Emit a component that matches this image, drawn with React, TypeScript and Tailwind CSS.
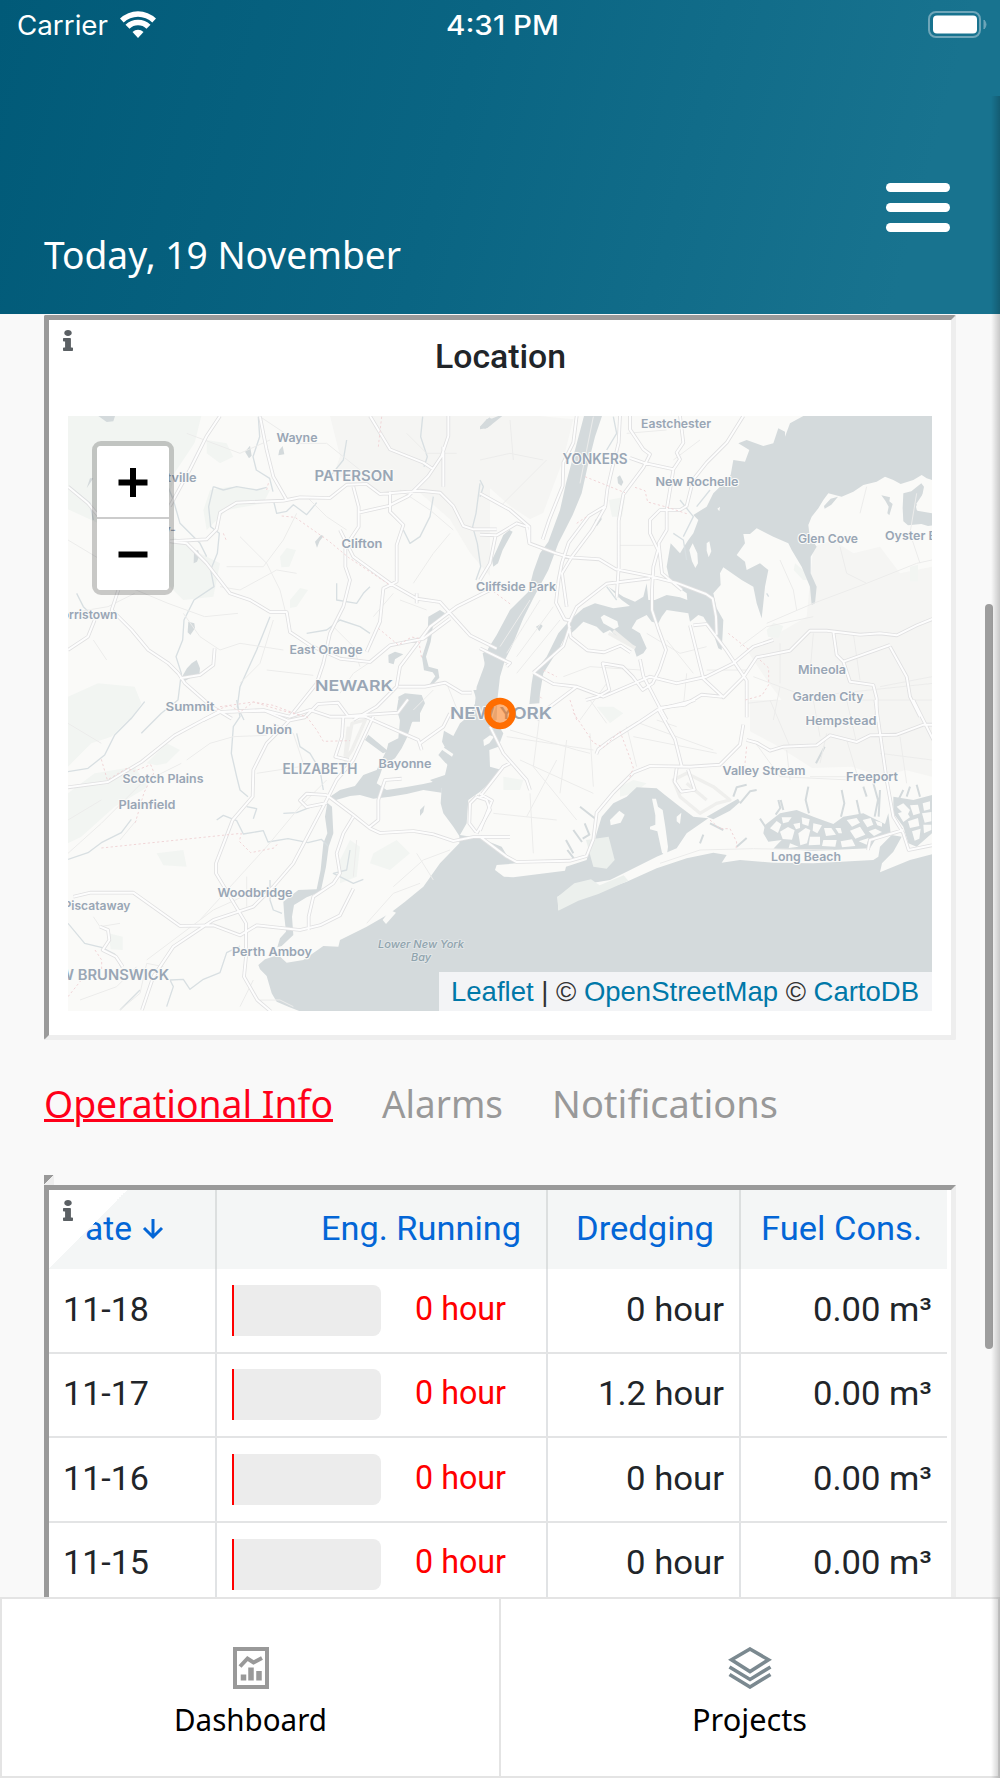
import type { ReactNode } from "react";
import { FaInfo } from "react-icons/fa";

type TileId = "nw" | "ne" | "sw" | "se";

// Each tile draws in its own 3x space, placed on the 864x594 map viewport.
const TILE_TRANSFORM: Record<TileId, string> = {
  nw: "translate(-28 -16) scale(.33333)",
  ne: "translate(412 -16) scale(.33333)",
  sw: "translate(-28 284) scale(.33333)",
  se: "translate(412 284) scale(.33333)",
};

const TILES: TileId[] = ["nw", "ne", "sw", "se"];

const WATER: Record<TileId, string[]> = {
  nw: [
    "M1350 745l-22 15 8 40-12 50-10 60 5 50h40z",
    "M175 48l25 18 20-2 5-16z",
    "M1320 80l20-22 14-4v20l-18 12z",
    "M445 665l18 5 2 15-14 20-8-8zM455 790l15-10 10 25-2 20-20 5-28 15-4-15 15-25z",
    "M1075 890l20-10 50 5 10 25-15 30v25h-60z",
    "M1165 650l35-20 15 10-35 30-8 55-14 45 8 30 28 8 4 25-24 25-6-4 18-25-8-12-26-6-6-40 16-50z",
    "M825 425l18-20 8 3-12 15-8 20zM1045 765l20-10 25 8-25 15-4 15-15-5zM718 150l10-12 5 25-18 3zM615 155l15-18 5 30-8 8z",
    "M462 455l12-5 5 15-8 20-10 5zM150 235l10 0-20 30zM1338 60l12-8v20z",
  ],
  ne: [
    // Hudson
    "M312 48H366L345 110L325 190L305 280L278 345L235 430L205 510L160 595L130 655L95 740L75 780L60 830L52 900L50 960H-20L-10 860L12 800L25 745L50 705L90 630L145 575L160 515L180 460L205 425L240 330L258 250L285 150Z",
    "M0 80l25-20 30-12h12l-45 36-22 4z",
    // Long Island Sound and East River
    "M970 48H1356V240L1340 235L1325 225L1300 240L1262 252L1240 240L1215 230L1190 245L1150 255L1120 275L1085 290L1045 280L1030 300L1015 325L995 350L985 375L988 400L1000 425L1010 440L992 470L992 520L1010 560L1005 610L995 615L990 560L965 500L935 450L925 430L880 410L830 385L810 402L790 402L795 430L770 465L795 485L800 510L840 490L865 510L855 560L850 610L845 655L830 610L820 560L785 540L730 502L720 520L722 555L700 580L710 625L730 660L728 700L725 750L715 745L700 700L670 650L655 645L630 665L625 640L560 630L545 650L535 670L515 665L500 645L470 660L455 685L480 700L500 745L490 760L470 770L460 740L420 720L390 690L370 700L350 680L310 665L285 690L250 720L240 740L215 780L190 820L180 880L178 910L148 912L155 850L160 820L200 770L235 700L270 660L310 625L345 610L400 625L450 618L425 600L385 560L430 590L465 605L490 590L500 550L505 600L525 600L560 585L600 592L622 600L620 580L570 545L560 500L572 430L600 460L612 440L625 420L640 400L655 360L640 345L680 320L700 280L720 260L752 225L760 180L795 185L808 150L775 130L800 120L850 138L880 130L895 85L915 95L915 110L930 70Z",
    "M1270 280l24-6 30-24 8 10-6 30-18 30 4 12 46 8 0 36-14 2-20-6-40 4-14-12-2-40zM1204 286l26 6-2 12 10 8-10 34-6-6 4-20-10-18z",
    "M412 232l8-6 10 20-6 12-10-8zM345 360l18-12 2 10-14 20-8-2zM168 680l14-8 6 6-10 16z",
    "M1032 318l20-22 22-6-20 24-20 12zM50 450l20-45 18-15 10 5-30 55-14 40-14 10-4-20z",
  ],
  sw: [
    // Newark Bay
    "M1075 0H1138L1128 45L1115 70L1100 115L1085 145L1065 175L1030 195L1020 225L1010 250L1040 270L1095 262L1150 252L1205 240L1205 278L1150 270L1100 282L1050 290L1000 296L960 285L930 288L880 302L870 290L900 270L945 258L970 225L1010 210L1025 180L1040 150L1045 130L1075 115L1080 60L1070 30Z",
    // Arthur Kill
    "M862 308L876 320L880 400L866 440L858 500L842 575L800 592L762 615L756 650L760 705L725 738L712 742L720 715L738 695L733 650L730 605L775 570L830 568L842 510L850 430L862 400L855 350Z",
    "M975 120l10-16 60 50-16 6zM1140 330l14-14-4 20-10 12z",
  ],
  se: [
    // Upper and Lower Bay, ocean and Jamaica Bay
    "M-20 -30L-10 0L-30 45L-60 70L-80 108L-108 92L-114 125L-106 140L-125 165L-98 195L-105 225L-150 240L-115 265L-118 310L-110 340L-80 380L-62 408L-62 430L-120 490L-170 560L-225 605L-270 640L-340 680L-420 720L-425 740L-470 738L-530 780L-580 788L-605 765L-645 778L-665 795L-660 808L-640 828L-625 880L-610 905L-575 920L-540 934H1360V462L1290 480L1200 517L1206 490L1240 455L1265 410L1235 405L1200 440L1195 470L1180 480L1000 490L880 488L780 480L725 488L740 465L700 458L620 475L530 505L440 545L340 580L290 600L235 630L232 590L300 555L390 540L440 515L530 470L590 445L620 400L685 355L640 350L600 320L555 285L530 265L470 262L440 290L400 310L365 350L350 400L345 420L330 440L320 480L290 490L258 500L255 512L100 532L72 530L45 510L50 495L110 490L80 465L65 440L0 415L-60 405L-40 370L-35 300L0 275L30 248L65 210L30 200L28 150L55 140L70 100L45 60L50 -30Z",
    "M680 350l60-34 34-20 6 10-30 26-50 26z",
    // South shore marshes
    "M855 375L900 340L950 330L1000 350L1060 372L1090 350L1150 340L1215 372L1225 340L1232 400L1190 412L1170 445L1000 452L880 446L905 420L865 425L850 400Z",
    "M1240 290L1300 300L1356 285V400L1310 440L1285 430L1270 380L1240 340Z",
  ],
};

const ISLANDS: Record<TileId, string[]> = {
  nw: [],
  ne: [
    "M628 450l10-20 14 30 2 30-8 14-10-20zM680 430l8-6 6 30-8 18-6-20zM362 652l10-8 40 20 4 16-14 8-32-18zM712 326l8-6-2 14z",
    "M1310 310l20-30 12 2 2 50-34-2z",
  ],
  sw: [
    "M1150 168l72 24-10 20-76-34zM1190 128l50 34-4 8-52-36z",
    "M1050 630l-22 30 10 12 30-34z",
  ],
  se: [
    "M10 120l20-14 12 4-14 20-16 8z",
    "M510 380l16-6 0-28-10-50 12 0 6 24 14 10 8 50 8 60-4 30-14-12-14-64-22-6zM390 360l28-28 16 12-12 24-30 8zM590 350l14-12-4 34-10-8z",
    "M600 450l30-30 40-24 14 10-4 34-60 22zM1250 320l20-10 20 20-10 20z",
    "M870 385l20-22 14 10-10 26zM905 352l30 0-10 14-16 4zM900 395l24-14 20 10-8 28-28-2zM940 372l20-4 0 16-12 4zM955 400l22-16 14 6-10 40-20 6zM965 352l24 6-4 20-18-6zM1000 370l26 6-14 24-14-8zM990 410l30 0 0 24-34 2zM1032 384l22 0 14 20-30 4zM1030 420l40 0-4 20-40-2zM1066 384l16 0 4 16-10 0zM1100 360l30-6 10 14-24 12zM1110 392l30-12 16 24-30 12zM1148 360l24-6 8 20-18 8zM1166 394l20-8 20 10-24 12zM1082 424l34-6 10 20-40 4zM1136 424l30-10-6 20zM1186 362l20 6 0 12-14-4zM930 430l26 10-30 4z",
    "M1254 340l24-8 12 20-20 14zM1290 316l24-2 6 26-20 6zM1328 310l22-6 0 24-18 4zM1284 364l30-10 4 24-28 6zM1326 340l28-4 0 28-20 4zM1296 394l26-8-4 30-14 6zM1330 374l24 0 0 16-22 10z",
  ],
};

const CREEKS =
  "M895 300l6 24-14 20M910 330l-8-30M985 260l-8 40 10 40M1085 270l8 40-10 40M1130 300l10 44M1180 250l14 50-10 50M1160 290l-10-30M1200 270l-4 80M1250 310l20-40M1280 290l10-30M1320 290l-10-36M840 356l20 30M1034 140l-26 50M760 290l10-28 30-8M780 310l30-36 20-4M690 370l40 20M660 430l10-26M300 320l46 36M314 370l14 34-20 12M280 390l26 36M258 420l22 40M262 450l20 26M770 440l30-26";

const PARKS: Record<TileId, string[]> = {
  nw: [
    "M84 48h400l-20 80-60 90-30 140-60 60-100-30-130-60zM84 890l90-40 110 10 20 50-30 50H84zM510 270l60-10 120 10-20 40-110 20-60 60-10-60zM720 470l20-26 28 6-20 50-24 2zM750 600l30-36 24 6-34 50-20 4zM500 120l60 10 20 40-40 20-40-30z",
    "M400 410l80 50 60 30-20 100-90 10-60-60z",
  ],
  ne: ["M860 690l20-22 30 10-14 36-32-4zM945 490l24 20 20 30-20 0-28-30zM386 300l50-10-10 60-30 0zM1290 500l24-6 0 50-24 0z"],
  sw: ["M84 0h180l10 50-60 60-60 20-70 70zM320 190l60-60 40 20-40 40-30 6zM350 460l80-10 10 50-70-4zM206 700l42 10 0 40-36-2zM900 480l30-60 30 20-10 90-50 20zM84 280l80-60 120-20 40 60-100 60-100 90-40 20zM1000 460l70-40 40 40-60 50-60-20z"],
  se: ["M420 260l40-20 40 10-40 30-40 10zM70 230l60 10-10 30-50 0zM350 20l50 0 30 20-40 30z"],
};

// Barrier-beach parks that sit on top of the water.
const BEACH_PARKS = "M233 590l50-40 50-12 26 18 72-30 14 16-90 40-60 20-60 30zM318 420l68-10 18 70-24 26-40-6z";

const URBAN: Record<TileId, string[]> = {
  nw: ["M870 48h480v480l-60-70-60-100-90-80-110 0-90-40-60-10 20-60z"],
  ne: ["M0 48h180l100 10-30 120-60 160-40 20-60-40-90-80zM1000 440l60-20 60 40 80-20 60 80 96-20V960H1010l-90-40-60-80-60-90 60-30 120-70z"],
  sw: [],
  se: ["M810 0h546v230l-80-20-70 20-90-30-120 4-110-70-76-40z"],
};

const AIRPORTS: Partial<Record<TileId, string>> = {
  ne: "M386 700l80 44M400 692l60 50",
  sw: "M936 70l40-10-40 90-20 30zM925 80l-10 90",
  se: "M580 240l40-20 80 40 50 40-40 10-50 30-60-50zM620 250l60 50",
};

const STREAMS: Partial<Record<TileId, string>> = {
  nw: "M655 50l4 60-20 60 10 40 40 25 10 40M520 260l30 10 40-10 60 10 30-8M520 260l-14 60 6 60 26 20-6 60-20 50 10 50-60 40-30 60-4 60-20 50 16 50-10 80-50 40-60 60M380 250l20 50 20 70 60 60 20 40M700 300l10 40 30-6 20-20 40 30 30-36M1148 50l-6 60 20 60-10 30M920 120l-10 60-40 50M1320 250l-12 90-10 40 14 50 10 70-14 40M690 650l-40 100-50 110-8 60 20 40M800 700l60-10 40-30 60 20 30 20M890 550l0 50 60 10 20-30 20-20M90 260l60 50 10 50M1180 290l-10 60-30 60-30 20-20-40M110 580l20 40 20 20",
  ne: "M0 240l10 20-10 30M380 560l30 40M400 50l10 50-30 50M860 580l6 10M600 300l40 50-30 60M580 400l30 20 10 60M650 320l40-50",
  sw: "M84 215l60-10 50-40 30-60 50-50 40-50M84 478l60-20 40-30 60-30 30-40M590 0l10 50-20 30-6 80 16 70 10 40 24 20M530 360l20-14 40 16 20 40 60-10 14 34 60-10 60 12 40-10 20 20M620 320l30 6-10 30M770 100l10 40 30 20 30 50 10 60M730 340l40-2 60-24M84 670l50 60 50 12 40 20 20 40M240 930l60-60M380 920l20-60-10-20 40-2 20 30 40-30 50-20 20-60 40-20M690 540l0 60 10 30 26 10M930 450l-10 60-40 10 60 30 30-12",
};

const MAIN_ROADS: Record<TileId, string> = {
  nw: "M540 48l-40 60-50 100-60 110M84 260l60 50 50 60 30 80M84 750l60-40 20-50M235 570l-20 60 60 60 50 60 60 40 30 30 20 30 80 70 60 36M390 424l110-6 30-30 10-50 50-30 140-6 50-10 90 2 50-40 60-2 40 30 120-10 60 6 40 40 30 60 30 10 70 0M390 424l50 6 60 60 70 90 60 20 60 36 50 0 10 60 60 40 90 40 90 10 60-50 100-20 80-60M660 50l20 100 20 80 40 70M990 48l60 100 100 40 30 20M1225 48l0 60-20 60-40 60-60 60-60 30-90 20M940 260l16 60 0 60-40 60 0 60 14 40-20 80-40 80-20 90-20 60-80 100M1050 275l0 60 40 40-20 60 0 110-40 20-10 100-40 90M900 390l40 80 110 80 80 46 70 10 90 100 80 40M1350 570l-100 50-80 60-60 80-30 40-10 60-60 60-70 40M1075 860l80 0 60-12 50 30 30 0M490 960l50-24 130-6 80 20 60-20 60 20 110 0M420 835l60-10 40-30 4-50M1210 260V140M1130 610l0-30",
  ne: "M290 48l-10 80-30 60-2 70-40 100-20 60M0 280l90 50 58 50 0 50M0 404l50 2 60-36 30 10 8 50 80 30 40 12 90 6 50 30 100 20 80 20 90 34 20 14 10 54 2 54M0 540l30-50 16-80M420 48l-4 80-20 80-14 60-6 50-50 30-60 80-20 60-10 50-8 70 26 50 20 4M376 320l-40 70-60 80-30 50 14 100M450 48v40l40 60 20 15-20 40-60 80-14 80 0 140-6 90M600 48l10 80-20 30 10 20-20 30-90-20-40-14M790 48l-50 80-60 60-40 50-20 80-20 12-60 0-30 30 0 40 24 50-14 50-4 70 0 60 20 60 22 60-20 60-20 40-30 20-30-40-30-30-60-10 20 80-34 20-36 10M580 210l-20 120 0 60-24 40 10 90 60 50M510 535l-130 16-90 70-24 50 6 40 50 40 50 6 50-20 30 20M640 676l40-4 60 80 20 30 40 60 0 110M630 676l40 160 60 56 60-60 40-60 100-20 60-60 50 0 100 12 60-4 50 6 60-30 50-20M1230 740l50 90 10 60 30 60M1060 695l10 70 20 20 140-50M480 778l10 50 50 96 20 36M290 860l80 30 140-60 80 20 90-20 80-40 60-50 60-20M160 818l60 34 70 8-80 60-40 40M160 818l90-80 20-60M0 745l90 44-10 10M535 924l80-10 50-30 60 6M1090 785l20 60 70 10 10 40 0 70",
  sw: "M84 262l120-16 100-60 100-80 130-70 140-4 70 30 50-10 40-40 60-4 30 40 150-10 30-40M750 60l-70 70-40 80-2 80-60 70-50 130 0 30 60 100 30 50 0 100-6 60 40 70 40 34M1000 50l-60 130-50 60-30 60-100 190-60 70-60 60-120 40-120 80-60 90-34 100M100 590l50-12 130 0 140 100 100-2 80 30 50-30 130 14 60-14 60-30 40-80M975 50l160 70 10 30M1140 130l70-50 20-40M910 50l-4 60-20 60 40 10M860 285l80 60 50 40 30 14 100-6 60 10 60 20 60-12 110 0M1085 236l-50 4-20 60 0 60-30 24M940 350l-30 50-20 60 10 60-20 30-60 40-14 60 0 40M860 285l-60-4-20 20 20 20 60-12M180 680l24 10 4 30-20 30 40 20 20 30M1310 290l-20 20-2 60 20 26M1310 290l30 10 10 30-40 70",
  se: "M0 290l70-90 20-10M30 80l40 80 70 80 10 30M0 282l36 20-36 90M0 410l80 60 30 16 160-4 50-14 20-50 10-80 50-60 60-60 50-20 120 2 90-6 60-60 10-60M535 28l50 90 20 80M535 28l-60 40-80 50-40 30-6 14M535 28l80-20 30-8M800 120l30 8 40 24 40-12 100-4 40-30 80 20 40-20 80-2 80-30 66 0M1186 0l24 170 10 70 20 110 30 50 16 50 70-14M1270 390l-100 30-6 30M1300 0l30 60 30 60M590 205l-6 40 20 30 40-6-20-60",
};

const MINOR_ROADS: Record<TileId, string> = {
  nw: "M250 280l60 60 60 40M84 420l100 60 80 80 120 50 110 40 100-10M430 640l50 70 60 40 60-20 130 20M660 50l120 80 80 0 100 80M440 100l160 60 90-40M560 500l110 0 60-80 40-80M540 560l60 10 110-60 60 10M600 410l80 80 40 80 20 80M800 290l60 60 60 40M680 810l140 16M700 660l-40 130-60 60M960 800l-20-60-60-60M1100 100l60 60 90 0M1230 400l-50 60-60 90M1240 390l-70-60-90-60M1080 600l80 30M1000 650l60-70M84 640l120-20 80-40M200 780l-40-60M900 880l40-60 60-40M1180 870l-60 60M1220 850l40 100",
  ne: "M0 180l90-20 100 20M90 60l10 120M420 436l100 0M340 50l-40 200M560 90l-120 10M660 120l-80 60M900 480l40 90 10 60M1080 440l20 80 60 30 150-60 46-10M1160 550l-160 60-140 60M1310 280l-20 120 30 90M1160 260l-20 80M780 740l80-60 140-30M500 700l100 60 80-20M560 720l80 100M250 830l80-30 150 10M300 960l80-110M610 920l10-100M680 810l120 0M820 830l160 60 380-40M900 730l0 120M1000 700l-10 120M1120 700l20 140M1200 860l156-30M880 960l20-100M1140 900h216M200 180l-140 140M150 600l-90 140M180 600l-100 160M220 620l-110 150M240 660l-130 160",
  sw: "M160 650l20 30 60-10M84 460l100-90 120-120 120-60M84 360l100-60M480 660l200-220 100-120 80-80M320 780l200-150 110-50M120 900l110-40 60-60M370 800l-50-10-20 90-60 50M440 180l70-50 70-20 100-4M650 220l130-20M620 530l0 90M640 840l-40 80M660 900h60l40 20M950 420l-10 110M1060 560l90-80 80-30M980 670l80-90 80-30M700 70l60 30 30 90M84 70l100 60M240 420l50-60M1130 460l50 80",
  se: "M80 110l260 40M90 90l200 60 40 10M180 40l-20 160 130 160M260 120l-20 160M330 100l10 160M440 80l30 120M530 60l60 20M380 70l-50-70M120 180l220 100M230 180l-90 170M40 340l190 20M150 280l10 180M480 70l220 80M460 110l250 50M820 120l80 110 210 10M920 150l10 90M1040 100l-20 90M1100 120l30 100M800 10l90-10M870 0l60 140M1000 0l20 110M1100 0l30 130M1200 160l156 20M1260 110l20 140M990 230l200 0M540 490l120-40 160-4 240 4",
};

const BORDERS: Partial<Record<TileId, string>> = {
  nw: "M1025 50l-10 90M680 270l6-24M550 400l10 24M725 348l40 4 100 70 60 50 120 80M1015 685l60 50 40-24 20 4 10 60M530 930l40-14 30 20 40-30 60 10 80 30",
  ne: "M315 230l120 48M465 262l30 10 8 34 60 16 60 20M290 370l30-20M40 574l56 42M745 700l60 48M840 780l26 24 0 50-20 32-50 14M190 810l40 20M180 890l8 8M270 900l20 60",
  sw: "M184 178l18 62 60-36 20 10 50-20 10 24-30 60-26 90M184 444l420-44-6 24 34 34 70-14 14-16M540 20l100-14 80 24 80 20 30 40 20 34 80-2M165 750l20 30 0 30M84 890l40-50",
  se: "M280 38l60 90 30 14 50-48 30 80 10 30-14 36M800 140l-6 60M690 360l30 26 30 0 20 40-2 24",
};

type Label = { text: string; x: number; y: number; width: number; size?: number; italic?: boolean };

// Centre x, baseline y and drawn width, in map pixels.
const LABELS: Label[] = [
  { text: "Eastchester", x: 608, y: 12, width: 70 },
  { text: "Wayne", x: 229, y: 26, width: 41 },
  { text: "YONKERS", x: 527, y: 48, width: 65, size: 14 },
  { text: "PATERSON", x: 286, y: 65, width: 79, size: 14 },
  { text: "Montville", x: 100, y: 66, width: 57 },
  { text: "New Rochelle", x: 629, y: 70, width: 83 },
  { text: "Parsippany-", x: 71, y: 118, width: 74 },
  { text: "Clifton", x: 294, y: 132, width: 41 },
  { text: "Glen Cove", x: 760, y: 127, width: 60 },
  { text: "Oyster Bay", x: 850, y: 124, width: 66 },
  { text: "Cliffside Park", x: 448, y: 175, width: 80 },
  { text: "Morristown", x: 16, y: 203, width: 67 },
  { text: "East Orange", x: 258, y: 238, width: 73 },
  { text: "NEWARK", x: 286, y: 275, width: 78, size: 15 },
  { text: "Mineola", x: 754, y: 258, width: 48 },
  { text: "Summit", x: 122, y: 295, width: 49 },
  { text: "Garden City", x: 760, y: 285, width: 71 },
  { text: "NEW YORK", x: 433, y: 303, width: 102, size: 16 },
  { text: "Hempstead", x: 773, y: 309, width: 71 },
  { text: "Union", x: 206, y: 318, width: 36 },
  { text: "Bayonne", x: 337, y: 352, width: 53 },
  { text: "ELIZABETH", x: 252, y: 358, width: 75, size: 14 },
  { text: "Valley Stream", x: 696, y: 359, width: 83 },
  { text: "Freeport", x: 804, y: 365, width: 52 },
  { text: "Scotch Plains", x: 95, y: 367, width: 81 },
  { text: "Plainfield", x: 79, y: 393, width: 57 },
  { text: "Long Beach", x: 738, y: 445, width: 70 },
  { text: "Woodbridge", x: 187, y: 481, width: 75 },
  { text: "Piscataway", x: 29, y: 494, width: 67 },
  { text: "Lower New York", x: 353, y: 532, width: 86, size: 11, italic: true },
  { text: "Bay", x: 353, y: 545, width: 20, size: 11, italic: true },
  { text: "Perth Amboy", x: 204, y: 540, width: 80 },
  { text: "NEW BRUNSWICK", x: 36, y: 564, width: 130, size: 14 },
];

const ROWS = [
  { date: "11-18", running: "0 hour", dredging: "0 hour", fuel: "0.00 m³" },
  { date: "11-17", running: "0 hour", dredging: "1.2 hour", fuel: "0.00 m³" },
  { date: "11-16", running: "0 hour", dredging: "0 hour", fuel: "0.00 m³" },
  { date: "11-15", running: "0 hour", dredging: "0 hour", fuel: "0.00 m³" },
];

// Single line of text stretched to a fixed width.
function FitText({
  children,
  width,
  size,
  className,
  weight = 400,
}: {
  children: string;
  width: number;
  size: number;
  className?: string;
  weight?: number;
}) {
  return (
    <svg width={width} height={size * 1.5} className={`block shrink-0 overflow-visible ${className ?? ""}`}>
      <text
        x="0"
        y={size * 1.07}
        fontSize={size}
        fontWeight={weight}
        textLength={width}
        lengthAdjust="spacingAndGlyphs"
        fill="currentColor"
      >
        {children}
      </text>
    </svg>
  );
}

function Layer({ render }: { render: (tile: TileId) => ReactNode }) {
  return (
    <>
      {TILES.map((tile) => (
        <g key={tile} transform={TILE_TRANSFORM[tile]}>
          {render(tile)}
        </g>
      ))}
    </>
  );
}

function CityMap() {
  return (
    <svg viewBox="0 0 864 595" className="block h-[595px] w-[864px]" fill="none" strokeLinejoin="round">
      <rect width="864" height="595" fill="#fafaf8" />
      <Layer render={(tile) => URBAN[tile].map((d) => <path key={d} d={d} fill="#f5f5f3" />)} />
      <Layer render={(tile) => PARKS[tile].map((d) => <path key={d} d={d} fill="#f2f5f2" />)} />
      <Layer render={(tile) => WATER[tile].map((d) => <path key={d} d={d} fill="#d4dadc" />)} />
      <Layer render={(tile) => ISLANDS[tile].map((d) => <path key={d} d={d} fill="#fafaf8" />)} />
      <g transform={TILE_TRANSFORM.se}>
        <path d={CREEKS} stroke="#d4dadc" strokeWidth="6" />
        <path d={BEACH_PARKS} fill="#ecf0ed" />
      </g>
      <Layer render={(tile) => <path d={STREAMS[tile]} stroke="#d8dfe2" strokeWidth="4" />} />
      <Layer render={(tile) => <path d={AIRPORTS[tile]} stroke="#efefed" strokeWidth="10" />} />
      <Layer render={(tile) => <path d={MINOR_ROADS[tile]} stroke="#ececeb" strokeWidth="3" />} />
      <Layer render={(tile) => <path d={MAIN_ROADS[tile]} stroke="#e0e0e1" strokeWidth="11" />} />
      <Layer render={(tile) => <path d={MAIN_ROADS[tile]} stroke="#fdfdfd" strokeWidth="6" />} />
      <Layer render={(tile) => <path d={BORDERS[tile]} stroke="#f0d5d7" strokeWidth="3" strokeDasharray="7 7" />} />
      {LABELS.map((label) => (
        <text
          key={label.text}
          x={label.x - label.width / 2}
          y={label.y}
          textLength={label.width}
          lengthAdjust="spacingAndGlyphs"
          fontSize={label.size ?? 12}
          fontWeight={label.italic ? 500 : 600}
          fontStyle={label.italic ? "italic" : undefined}
          fill={label.italic ? "#8fa3ad" : "#99a6b5"}
          stroke={label.italic ? "#dfe4e6" : "#fafaf8"}
          strokeWidth="2"
          paintOrder="stroke"
          className="font-[Inter,sans-serif]"
        >
          {label.text}
        </text>
      ))}
      <circle cx="432" cy="297.500" r="12.500" fill="#ff6d00" fillOpacity=".5" stroke="#ff6d00" strokeWidth="6.500" />
    </svg>
  );
}

function StatusBar() {
  return (
    <div className="flex h-[50px] items-center justify-between pr-[13px] pl-[17px] font-[Inter,sans-serif]">
      <div className="flex w-[300px] items-center gap-3">
        <FitText width={91} size={27} className="h-[38px]">Carrier</FitText>
        <svg width="36" height="27" viewBox="0 0 36 27" className="-mt-[2px]" fill="currentColor">
          <path d="M18 27l-5.500-6a8 8 0 0 1 11 0z" />
          <path d="M5.500 13.700a18 18 0 0 1 25 0l-4 4a12.500 12.500 0 0 0-17 0z" />
          <path d="M0 7.500a26 26 0 0 1 36 0l-3.700 4a20.500 20.500 0 0 0-28.600 0z" />
        </svg>
      </div>
      <FitText width={113} size={27} weight={500} className="h-[38px]">4:31 PM</FitText>
      <div className="flex w-[300px] justify-end">
        <svg width="59" height="28" viewBox="0 0 59 28" fill="none">
          <rect x="1" y="1" width="51" height="25" rx="7" stroke="#6fa6b9" strokeWidth="2" />
          <rect x="5" y="4.500" width="44" height="18" rx="4" fill="#fff" />
          <path d="M56 9q4 4.500 0 9z" fill="#6fa6b9" stroke="#6fa6b9" />
        </svg>
      </div>
    </div>
  );
}

function Header() {
  return (
    <header className="h-[314px] bg-[linear-gradient(105deg,#015a78_0%,#0a6583_45%,#18738f_90%)] text-white">
      <StatusBar />
      <div className="flex h-[264px] items-end justify-between pr-[50px] pb-[29px] pl-11 font-['Noto_Sans',sans-serif]">
        <FitText width={357} size={38}>Today, 19 November</FitText>
        <button type="button" aria-label="Menu" className="mb-[53px] grid gap-[10.500px]">
          <span className="h-[9.500px] w-16 rounded-full bg-white" />
          <span className="h-[9.500px] w-16 rounded-full bg-white" />
          <span className="h-[9.500px] w-16 rounded-full bg-white" />
        </button>
      </div>
    </header>
  );
}

function InfoMark() {
  return (
    <FaInfo
      preserveAspectRatio="none"
      className="absolute top-[10px] left-[14px] h-[21px] w-[10px] text-[#5b6064]"
    />
  );
}

function LocationCard() {
  return (
    <section className="relative ml-11 h-[725px] w-[912px] rounded-[2px] border-[5px] border-t-[#9a9a9a] border-r-[#eeeeee] border-b-[#eeeeee] border-l-[#9a9a9a] bg-white">
      <InfoMark />
      <div className="flex h-[96px] justify-center pt-[13px] font-[Roboto,sans-serif] text-[#212529]">
        <FitText width={131} size={32.500} weight={500}>Location</FitText>
      </div>
      <div className="relative mx-[19px] h-[595px] w-[864px] overflow-hidden">
        <CityMap />
        <div className="absolute top-[25px] left-6 h-[154px] w-[82px] rounded-[9px] border-[5px] border-black/20 bg-clip-padding">
          <button type="button" aria-label="Zoom in" className="grid h-[73px] w-full place-items-center rounded-t-[4px] border-b-[2.500px] border-[#ccc] bg-white">
            <svg width="30" height="30" viewBox="0 0 30 30" fill="none" stroke="#000" strokeWidth="6">
              <path d="M0.500 15.500h29M15 1v29" />
            </svg>
          </button>
          <button type="button" aria-label="Zoom out" className="grid h-[71px] w-full place-items-center rounded-b-[4px] bg-white">
            <svg width="30" height="30" viewBox="0 0 30 30" fill="none" stroke="#000" strokeWidth="6">
              <path d="M0.500 14.500h29" />
            </svg>
          </button>
        </div>
        <div className="absolute right-0 bottom-0 flex h-[39px] w-[493px] items-center bg-[#f3f4f6] pl-3 font-['Liberation_Sans',sans-serif] text-[#333]">
          <svg width="470" height="39" className="block">
            <text x="0" y="29" fontSize="27.500" textLength="468" lengthAdjust="spacingAndGlyphs" fill="#333">
              <tspan fill="#0078a8">Leaflet</tspan> | © <tspan fill="#0078a8">OpenStreetMap</tspan> © <tspan fill="#0078a8">CartoDB</tspan>
            </text>
          </svg>
        </div>
      </div>
    </section>
  );
}

function Tabs() {
  return (
    <nav className="flex h-[135px] gap-[49px] pt-[37px] pl-11 font-['Noto_Sans',sans-serif] text-[#999]">
      <div className="relative h-[60px] text-[#ff0019]">
        <FitText width={289} size={38}>Operational Info</FitText>
        <span className="absolute top-[42px] left-0 h-[3px] w-[30px] bg-[#ff0019]" />
        <span className="absolute top-[42px] left-[39px] h-[3px] w-[250px] bg-[#ff0019]" />
      </div>
      <FitText width={121} size={38}>Alarms</FitText>
      <FitText width={226} size={38}>Notifications</FitText>
    </nav>
  );
}

function OperationalTable() {
  const columns = "grid grid-cols-[168px_331px_193px_206px]";
  return (
    <section className="ml-11 w-[912px] font-[Roboto,sans-serif]">
      <div className="h-[10px] w-[10px] bg-[linear-gradient(135deg,#999_50%,#eee_50%)]" />
      <div className="relative h-[430px] overflow-hidden border-[5px] border-b-0 border-t-[#9a9a9a] border-r-[#eeeeee] border-l-[#9a9a9a] bg-white">
        <div className={`${columns} h-[79px] w-[898px] bg-[#f4f6f6] text-[#0366d6]`}>
          <div className="flex items-center border-r-2 border-[#dcdfdf] pl-[14px]">
            <FitText width={69} size={33}>Date</FitText>
            <svg width="22" height="22" viewBox="0 0 22 22" className="-mt-[2px] ml-[10px]" fill="none" stroke="currentColor" strokeWidth="3">
              <path d="M11 1v18M2 10l9 9 9-9" />
            </svg>
          </div>
          <div className="flex items-center justify-end border-r-2 border-[#dcdfdf] pr-[25px]">
            <FitText width={200} size={33}>Eng. Running</FitText>
          </div>
          <div className="flex items-center justify-end border-r-2 border-[#dcdfdf] pr-[25px]">
            <FitText width={138} size={33}>Dredging</FitText>
          </div>
          <div className="flex items-center justify-end pr-[25px]">
            <FitText width={161} size={33}>Fuel Cons.</FitText>
          </div>
        </div>
        {ROWS.map((row) => (
          <div key={row.date} className={`${columns} h-[84.600px] w-[898px] border-b-[2px] border-[#e3e4e5] text-[#212529]`}>
            <div className="flex items-center border-r-2 border-[#e1e3e5] pl-[14px]">
              <FitText width={86} size={33}>{row.date}</FitText>
            </div>
            <div className="flex items-center border-r-2 border-[#e1e3e5] pl-[15px]">
              <div className="h-[51px] w-[149px] rounded-r-[8px] border-l-2 border-[#ff0000] bg-[#ececec]" />
              <div className="ml-[34px] pb-[2px] text-[#ff0000]">
                <FitText width={91} size={33}>{row.running}</FitText>
              </div>
            </div>
            <div className="flex items-center justify-end border-r-2 border-[#e1e3e5] pr-[15px]">
              <FitText width={row.dredging === "0 hour" ? 98 : 126} size={33}>{row.dredging}</FitText>
            </div>
            <div className="flex items-center justify-end pr-[15px]">
              <FitText width={119} size={33}>{row.fuel}</FitText>
            </div>
          </div>
        ))}
        <div className="absolute top-0 left-0 h-[78px] w-[78px] bg-[linear-gradient(135deg,#fff_50%,transparent_50%)]" />
        <InfoMark />
      </div>
    </section>
  );
}

function BottomNav() {
  return (
    <nav className="grid h-[181px] grid-cols-[499px_497px] border-2 border-[#e4e4e4] bg-white font-['Noto_Sans',sans-serif]">
      <div className="flex flex-col items-center border-r-2 border-[#e4e4e4] pt-[48px]">
        <svg width="36" height="42" viewBox="0 0 36 42" fill="none" stroke="#999">
          <rect x="2" y="2" width="32" height="38" strokeWidth="4" />
          <path d="M7 19.500l7.500-8 6 4 8.500-4.500" strokeWidth="4" />
          <path d="M10.500 27.500v6M18 20.500v13M26 24v9.500" strokeWidth="5.500" />
        </svg>
        <FitText width={153} size={31} className="mt-[9px]">Dashboard</FitText>
      </div>
      <div className="flex flex-col items-center pt-[48px]">
        <svg width="44" height="42" viewBox="0 0 44 42" fill="none" stroke="#7b8990" strokeWidth="3.600">
          <path d="M22 2l18.500 10.800L22 24.500 3.500 12.800zM1.500 20L22 32.500 42.500 20M1.500 27.500L22 40l20.500-12.500" />
        </svg>
        <FitText width={115} size={31} className="mt-[9px]">Projects</FitText>
      </div>
    </nav>
  );
}

export default function App() {
  return (
    <main className="relative h-[1778px] w-[1000px] overflow-hidden bg-[#f9f9f9]">
      <Header />
      <div className="h-[1283px] overflow-hidden pt-[1px]">
        <LocationCard />
        <Tabs />
        <OperationalTable />
      </div>
      <BottomNav />
      <div className="absolute top-[604px] left-[985px] h-[745px] w-2 rounded-full bg-[#9e9e9e]" />
      <div className="absolute top-[96px] right-0 bottom-0 w-[9px] bg-gradient-to-r from-transparent to-black/20" />
    </main>
  );
}
